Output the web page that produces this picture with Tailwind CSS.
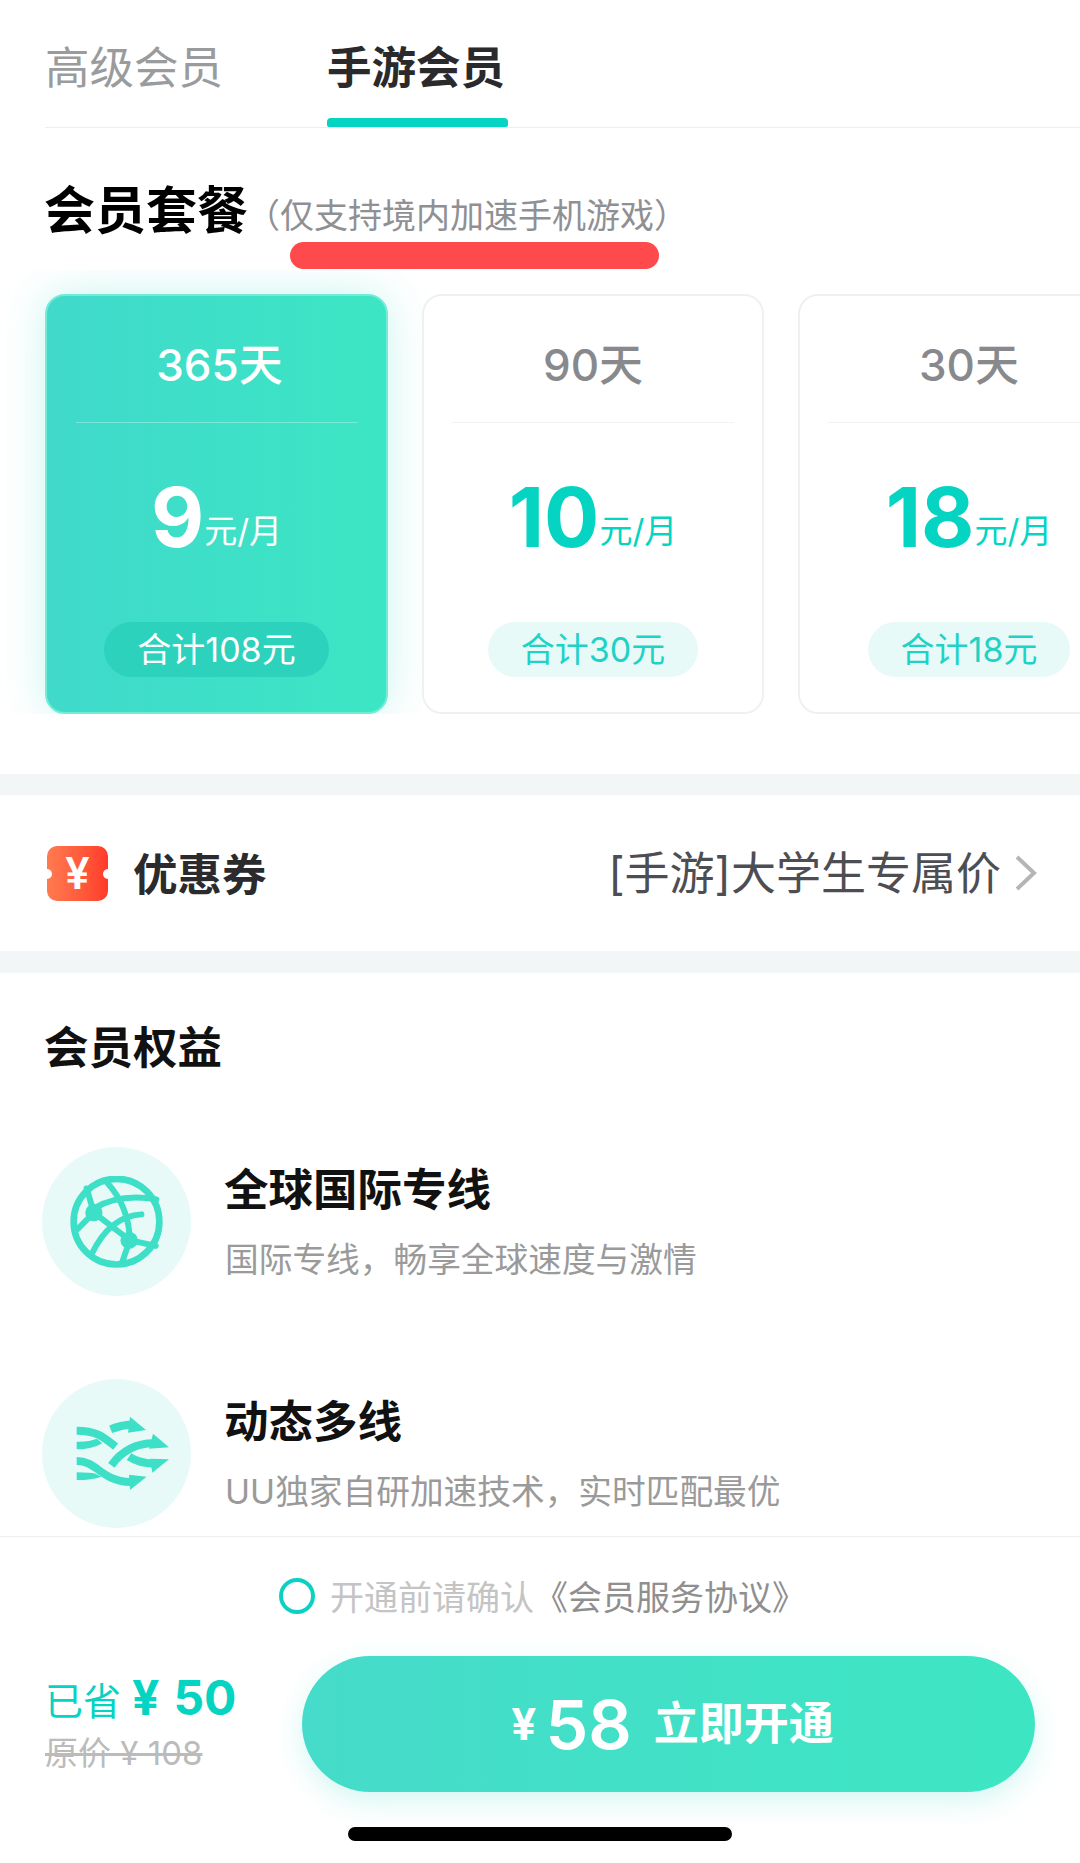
<!DOCTYPE html>
<html lang="zh-CN">
<head>
  <meta charset="UTF-8" />
  <meta name="viewport" content="width=device-width, initial-scale=1.0" />
  <title>手游会员</title>
  <script src="https://cdn.jsdelivr.net/npm/@tailwindcss/browser@4"></script>
</head>
<body class="bg-white">
  <div class="w-[1080px] h-[1863px] flex flex-col overflow-hidden bg-white [font-family:Inter,'Noto_Sans_CJK_SC',sans-serif]">
    <main class="h-[1536px] shrink-0 overflow-hidden">
      <!-- Tabs -->
      <div class="ml-[45px] h-[128px] flex border-b border-[#eeeeee]">
        <div class="w-[282px] pt-[44px] text-[44.5px] leading-[48px] text-[#9a9b9d]">高级会员</div>
        <div class="w-[181px] flex flex-col">
          <div class="pt-[44px] text-[44.5px] leading-[48px] font-semibold text-[#2a2a2c]">手游会员</div>
          <div class="mt-auto h-[9px] rounded-t-[4px] rounded-b-[2px] bg-[#05d4c3]"></div>
        </div>
      </div>

      <!-- Plan heading -->
      <div class="relative h-[142px] pl-[44px] pt-[58px] flex">
        <div class="text-[51px] leading-[50px] font-bold text-black">会员套餐</div>
        <div class="-ml-[2px] mt-[8px] text-[34px] leading-[44px] text-[#8f9094]">（仅支持境内加速手机游戏）</div>
        <div class="absolute left-[290px] top-[114px] w-[369px] h-[27px] rounded-full bg-[#ff4a4d]"></div>
      </div>

      <!-- Plan cards -->
      <div class="h-[444px] pt-[24px] pl-[45px] flex gap-[34px] overflow-hidden">
        <div class="w-[343px] h-[420px] shrink-0 flex flex-col items-center rounded-[20px] border-2 border-[#74ebd6] bg-gradient-to-r from-[#40d9cb] to-[#3ce6c4] shadow-[0_0_44px_rgba(62,220,200,0.28)]">
          <div class="pt-[45px] pl-[6px] text-[44px] leading-[48px] font-medium text-white">365天</div>
          <div class="mt-[33px] w-[282px] h-px bg-white/30"></div>
          <div class="mt-[53px] h-[84px] flex items-baseline text-white">
            <span class="text-[82px] leading-[84px] font-bold">9</span>
            <span class="text-[33px] -translate-y-[4px]">元/月</span>
          </div>
          <div class="mt-[62px] h-[55px] px-[33px] rounded-full bg-[#2dd2bd] text-[34px] leading-[55px] text-white">合计108元</div>
        </div>

        <div class="w-[342px] h-[420px] shrink-0 flex flex-col items-center rounded-[20px] border-2 border-[#f0f0f0] bg-white">
          <div class="pt-[45px] text-[44px] leading-[48px] font-medium text-[#88898d]">90天</div>
          <div class="mt-[33px] w-[282px] h-px bg-[#f2f2f2]"></div>
          <div class="mt-[53px] h-[84px] flex items-baseline text-[#05d4c3]">
            <span class="text-[82px] leading-[84px] font-bold">10</span>
            <span class="text-[33px] -translate-y-[4px]">元/月</span>
          </div>
          <div class="mt-[62px] h-[55px] px-[33px] rounded-full bg-[#e8faf8] text-[34px] leading-[55px] text-[#1fd2c6]">合计30元</div>
        </div>

        <div class="w-[342px] h-[420px] shrink-0 flex flex-col items-center rounded-[20px] border-2 border-[#f0f0f0] bg-white">
          <div class="pt-[45px] text-[44px] leading-[48px] font-medium text-[#88898d]">30天</div>
          <div class="mt-[33px] w-[282px] h-px bg-[#f2f2f2]"></div>
          <div class="mt-[53px] h-[84px] flex items-baseline text-[#05d4c3]">
            <span class="text-[82px] leading-[84px] font-bold">18</span>
            <span class="text-[33px] -translate-y-[4px]">元/月</span>
          </div>
          <div class="mt-[62px] h-[55px] px-[33px] rounded-full bg-[#e8faf8] text-[34px] leading-[55px] text-[#1fd2c6]">合计18元</div>
        </div>
      </div>

      <div class="mt-[60px] h-[21px] bg-[#f3f6f6]"></div>

      <!-- Coupon -->
      <div class="h-[156px] pl-[47px] pr-[43px] flex items-center">
        <div class="relative w-[61px] h-[55px] rounded-[10px] bg-gradient-to-r from-[#ff7a50] to-[#ff3a2a] flex items-center justify-center overflow-hidden text-[44px] leading-[55px] font-semibold text-white">
          ¥
          <span class="absolute -left-[5px] top-[23px] w-[10px] h-[10px] rounded-full bg-white"></span>
          <span class="absolute -right-[5px] top-[23px] w-[10px] h-[10px] rounded-full bg-white"></span>
        </div>
        <div class="ml-[25px] pt-[3px] text-[44.5px] leading-[48px] font-semibold text-[#2b2b2d]">优惠券</div>
        <div class="ml-auto pt-[1px] text-[45px] leading-[48px] text-[#4d4e54]">[手游]大学生专属价</div>
        <svg class="ml-[14px]" width="22" height="36" viewBox="0 0 22 36" fill="none">
          <path d="M2 2 L19 18 L2 34" stroke="#b5b5b5" stroke-width="4" />
        </svg>
      </div>

      <div class="h-[22px] bg-[#f3f6f6]"></div>

      <!-- Benefits -->
      <div class="pl-[42px]">
        <div class="ml-[2px] pt-[53px] text-[44.5px] leading-[44px] font-bold text-[#111111]">会员权益</div>

        <div class="mt-[77px] flex">
          <div class="w-[149px] h-[149px] rounded-full bg-[#e8faf8] flex items-center justify-center">
            <svg width="93" height="92" viewBox="150 135 280 276" fill="none" stroke="#3edfc7" stroke-width="18" stroke-linecap="round">
              <circle cx="290" cy="272" r="129" stroke-width="20" />
              <path d="M200 172 L222 245 L330 328 L408 345" />
              <path d="M222 232 Q300 186 410 205" />
              <path d="M262 155 Q328 228 330 328 L305 400" />
              <path d="M365 250 Q270 255 215 370" />
              <path d="M222 245 L172 295" />
              <circle cx="222" cy="245" r="26" fill="#3edfc7" stroke="none" />
              <circle cx="328" cy="328" r="26" fill="#3edfc7" stroke="none" />
            </svg>
          </div>
          <div class="ml-[33px] pt-[21px]">
            <div class="text-[44.5px] leading-[44px] font-bold text-[#111111]">全球国际专线</div>
            <div class="ml-px mt-[30px] text-[33.7px] leading-[36px] text-[#9a9a9a]">国际专线，畅享全球速度与激情</div>
          </div>
        </div>

        <div class="mt-[83px] flex">
          <div class="w-[149px] h-[149px] rounded-full bg-[#e8faf8] flex items-center justify-center">
            <svg class="ml-[12px]" width="94" height="75" viewBox="166 140 282 225" fill="none" stroke="#3edfc7" stroke-width="24">
              <path d="M168 184 C225 184 245 200 285 232" />
              <path d="M168 275 C230 275 240 335 330 338" />
              <path d="M270 180 Q300 168 335 165" />
              <path d="M272 288 Q320 222 400 222" />
              <path d="M325 262 Q355 282 400 283" />
              <g fill="#3edfc7" stroke="none">
                <path d="M168 217 Q205 218 228 208 L245 222 Q215 240 168 240 Z" />
                <path d="M168 309 Q210 310 225 313 L242 322 Q215 332 168 332 Z" />
                <path d="M328 142 L376 182 L322 190 Z" />
                <path d="M397 193 L445 234 L385 238 Z" />
                <path d="M395 310 L445 270 L388 268 Z" />
                <path d="M325 316 L378 322 L328 362 Z" />
              </g>
            </svg>
          </div>
          <div class="ml-[33px] pt-[21px]">
            <div class="text-[44.5px] leading-[44px] font-bold text-[#111111]">动态多线</div>
            <div class="ml-px mt-[30px] text-[33.7px] leading-[36px] text-[#9a9a9a]">UU独家自研加速技术，实时匹配最优</div>
          </div>
        </div>
      </div>
    </main>

    <!-- Bottom bar -->
    <footer class="flex-1 border-t border-[#eeeeee] bg-white">
      <div class="mt-[41px] ml-[279px] flex items-center h-[36px]">
        <div class="w-[36px] h-[36px] rounded-full border-[4px] border-[#0dd0c4]"></div>
        <div class="ml-[15px] pt-[3px] text-[34px] leading-[36px] text-[#c4c4c4]">开通前请确认<span class="text-[#8f8f8f]">《会员服务协议》</span></div>
      </div>

      <div class="mt-[42px] pl-[45px] flex">
        <div class="w-[257px]">
          <div class="pt-[18px] h-[66px] flex items-baseline text-[#05d4c3]">
            <span class="text-[38px] leading-[48px]">已省</span>
            <span class="ml-[11px] text-[48px] leading-[48px] font-bold">¥</span>
            <span class="ml-[14px] text-[48px] leading-[48px] font-bold">50</span>
          </div>
          <div class="mt-[13px] text-[33px] leading-[36px] text-[#bbbbbb] line-through">原价 ¥ 108</div>
        </div>
        <div class="w-[733px] h-[136px] pl-[8px] rounded-full bg-gradient-to-r from-[#46dbca] to-[#3de6c3] shadow-[0_10px_28px_rgba(62,220,200,0.22)] flex items-center justify-center text-white">
          <span class="text-[44px] font-bold">¥</span>
          <span class="ml-[9px] text-[68px] leading-[80px] font-semibold">58</span>
          <span class="ml-[22px] text-[45px] leading-[48px] font-semibold">立即开通</span>
        </div>
      </div>

      <div class="mt-[35px] mx-auto w-[384px] h-[14px] rounded-full bg-black"></div>
    </footer>
  </div>
</body>
</html>
